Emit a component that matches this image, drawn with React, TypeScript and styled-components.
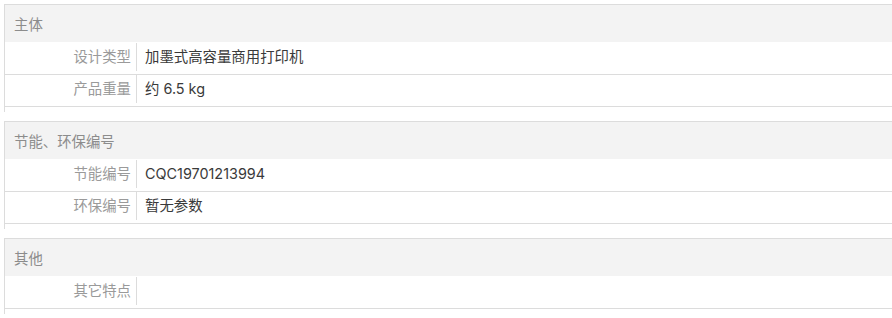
import React from "react";
import styled, { createGlobalStyle } from "styled-components";

const Global = createGlobalStyle`
  html, body { margin: 0; padding: 0; background: #fff; overflow: hidden; }
  body { font-family: Inter, "Noto Sans CJK SC", sans-serif; }
`;

const Page = styled.div`
  padding: 4px 0 0 4px;
  display: flex;
  flex-direction: column;
  gap: 9px;
`;

const Section = styled.section`
  border-top: 1px solid #dcdcdc;
  border-left: 1px solid #dcdcdc;
  padding-bottom: 5px;
  display: flex;
  flex-direction: column;
`;

const Header = styled.div`
  height: 37px;
  margin-bottom: 1px;
  background: #f3f3f3;
  padding-left: 9px;
  display: flex;
  align-items: center;
  font-size: 14.4px;
  color: #8c8c8c;
`;

const Row = styled.div`
  display: flex;
  height: 31px;
  border-bottom: 1px solid #dcdcdc;
`;

const Label = styled.div`
  width: 126px;
  padding-right: 5px;
  text-align: right;
  font-size: 14.4px;
  line-height: 28px;
  color: #9a9a9a;
  flex-shrink: 0;
`;

const Value = styled.div`
  height: 28px;
  border-left: 1px solid #dcdcdc;
  padding-left: 8px;
  font-size: 14.4px;
  line-height: 28px;
  color: #3a3a3a;
  flex: 1;
`;

type Item = { label: string; value: string };
type Group = { title: string; items: Item[] };

const groups: Group[] = [
  {
    title: "主体",
    items: [
      { label: "设计类型", value: "加墨式高容量商用打印机" },
      { label: "产品重量", value: "约 6.5 kg" },
    ],
  },
  {
    title: "节能、环保编号",
    items: [
      { label: "节能编号", value: "CQC19701213994" },
      { label: "环保编号", value: "暂无参数" },
    ],
  },
  {
    title: "其他",
    items: [{ label: "其它特点", value: "" }],
  },
];

export default function App() {
  return (
    <>
      <Global />
      <Page>
        {groups.map((g) => (
          <Section key={g.title}>
            <Header>{g.title}</Header>
            {g.items.map((it) => (
              <Row key={it.label}>
                <Label>{it.label}</Label>
                <Value>{it.value}</Value>
              </Row>
            ))}
          </Section>
        ))}
      </Page>
    </>
  );
}
